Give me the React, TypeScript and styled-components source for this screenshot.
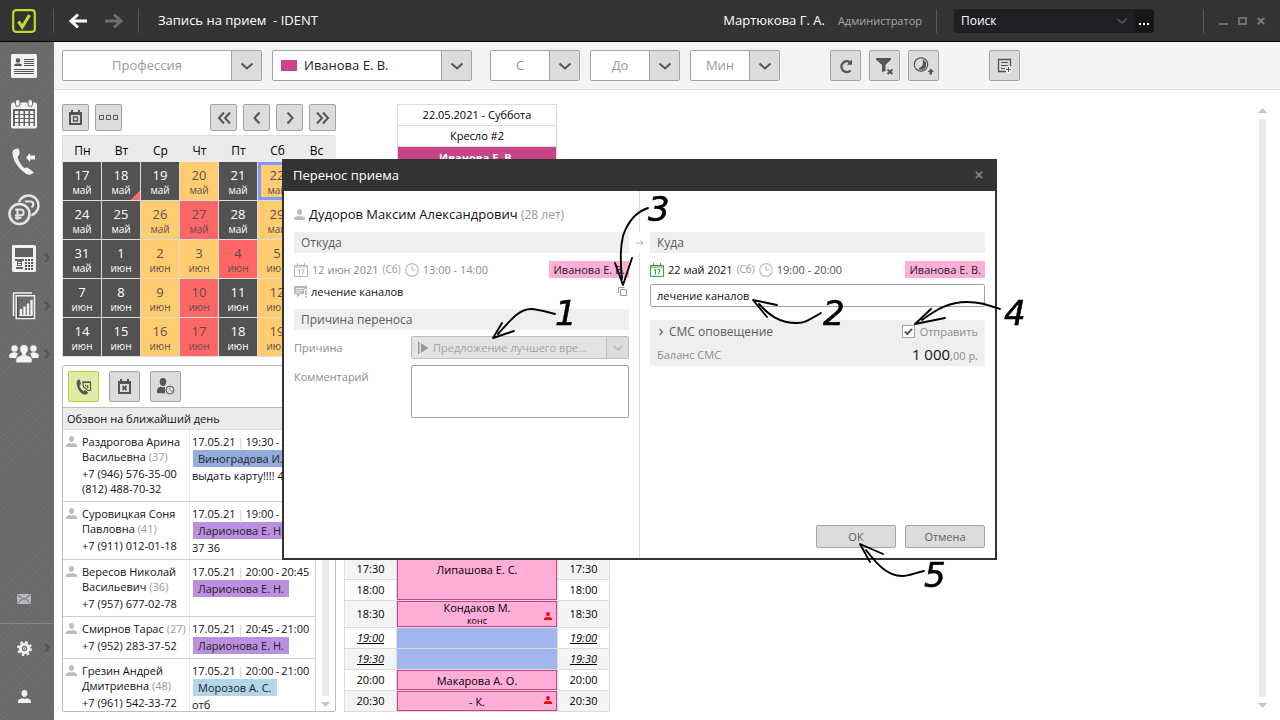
import React from "react";
import styled, { createGlobalStyle, css } from "styled-components";

const GlobalStyle = createGlobalStyle`
  *, *::before, *::after { box-sizing: border-box; }
  body { margin: 0; background: #fff; color: #111; }
  body, button, input, select, textarea {
    font-family: "Open Sans", "Noto Sans", sans-serif;
    font-size: 12px;
    line-height: 15px;
  }
  button, input, select, textarea { margin: 0; padding: 0; border: 0; background: none; color: inherit; border-radius: 0; }
  svg { display: block; flex: none; }
  table { border-spacing: 0; border-collapse: separate; }
  td, th { padding: 0; font-weight: 400; }
`;

/* ---------- shell ---------- */

const Shell = styled.div`
  height: 100vh;
  display: flex;
  flex-direction: column;
  overflow: hidden;
`;

const Header = styled.header`
  flex: none;
  height: 42px;
  display: flex;
  align-items: center;
  background: #333;
  border-bottom: 1px solid #000;
  color: #fff;
`;

const LogoLink = styled.a`
  width: 53px;
  padding-left: 12px;
`;

const Separator = styled.span`
  width: 1px;
  height: 24px;
  background: #5a5a5a;
`;

const HistoryNav = styled.div`
  display: flex;
  gap: 16px;
  width: 84px;
  padding-left: 14px;
`;

const Title = styled.h1`
  margin: 0 auto 0 19px;
  font-size: 13px;
  font-weight: 400;
  white-space: pre;
`;

const UserName = styled.span`
  font-size: 13px;
`;

const UserRole = styled.span`
  margin: 0 14px 0 13px;
  font-size: 11px;
  color: #a8a8a8;
`;

const Search = styled.div`
  width: 200px;
  height: 24px;
  margin: 0 49px 0 17px;
  display: flex;
  align-items: center;
  background: #1f2023;
  border-radius: 2px;
`;

const SearchInput = styled.input`
  flex: 1;
  min-width: 0;
  padding-left: 7px;
  outline: 0;
  &::placeholder { color: #fff; opacity: 1; }
`;

const MoreButton = styled.button`
  width: 20px;
  height: 22px;
  margin-left: 6px;
  background: #17181a;
  border-radius: 2px;
  display: flex;
  justify-content: center;
  padding-top: 13px;
`;

const WindowButtons = styled.div`
  display: flex;
  gap: 10px;
  padding: 0 15px;
`;

const Body = styled.div`
  flex: 1;
  min-height: 0;
  display: flex;
`;

const Sidebar = styled.nav`
  width: 54px;
  flex: none;
  display: flex;
  flex-direction: column;
  background:
    repeating-linear-gradient(135deg, rgba(255,255,255,0.03) 0 1px, transparent 1px 4px),
    repeating-linear-gradient(125deg, rgba(0,0,0,0.04) 0 1px, transparent 1px 3px),
    #6b6b6b;
`;

const SideLink = styled.a<{ $push?: boolean; $line?: boolean }>`
  position: relative;
  height: ${(p) => (p.$line ? 49 : 48)}px;
  width: 48px;
  display: flex;
  align-items: center;
  justify-content: center;
  ${(p) => p.$push && css`margin-top: auto;`}
  ${(p) => p.$line && css`width: 54px; padding-right: 6px; border-top: 1px solid #858585;`}
`;

const SideArrow = styled.span`
  position: absolute;
  left: 42px;
`;

const Workspace = styled.main`
  flex: 1;
  min-width: 0;
  display: flex;
  flex-direction: column;
`;

/* ---------- toolbar ---------- */

const Toolbar = styled.div`
  flex: none;
  height: 48px;
  padding: 8px;
  display: flex;
  background: #f4f4f4;
  border-bottom: 1px solid #dcdcdc;
`;

const Combo = styled.div<{ $width: number; $gap?: number }>`
  width: ${(p) => p.$width}px;
  height: 31px;
  margin-right: ${(p) => p.$gap ?? 10}px;
  display: flex;
  align-items: center;
  background: #fff;
  border: 1px solid #a3a3a3;
  border-radius: 2px;
`;

const ComboSelect = styled.select<{ $chosen?: boolean }>`
  flex: 1;
  min-width: 0;
  height: 100%;
  appearance: none;
  outline: 0;
  font-size: 13px;
  color: ${(p) => (p.$chosen ? "#222" : "#999")};
  text-align-last: ${(p) => (p.$chosen ? "left" : "center")};
`;

const ComboArrow = styled.span<{ $small?: boolean }>`
  width: ${(p) => (p.$small ? 22 : 30)}px;
  height: 100%;
  display: flex;
  align-items: center;
  justify-content: center;
  background: #dcdcdc;
  border-left: 1px solid ${(p) => (p.$small ? "#bdbdbd" : "#a3a3a3")};
`;

const Swatch = styled.span`
  width: 16px;
  height: 11px;
  margin: 0 7px 0 8px;
  background: #c94486;
`;

const IconButton = styled.button<{ $size: number; $active?: boolean; $gap?: number }>`
  width: ${(p) => p.$size}px;
  height: ${(p) => p.$size}px;
  margin-right: ${(p) => p.$gap ?? 0}px;
  display: flex;
  align-items: center;
  justify-content: center;
  background: ${(p) => (p.$active ? "#e0eca6" : "#dcdcdc")};
  border: 1px solid ${(p) => (p.$active ? "#b2d235" : "#a3a3a3")};
  border-radius: 2px;
`;

const Content = styled.div`
  flex: 1;
  min-height: 0;
  display: flex;
  padding: 14px 13px 8px 8px;
`;

/* ---------- left column ---------- */

const LeftColumn = styled.section`
  width: 274px;
  flex: none;
  display: flex;
  flex-direction: column;
`;

const CalendarBar = styled.div`
  height: 31px;
  display: flex;
  gap: 6px;
`;

const Push = styled.span`
  flex: 1;
`;

const Calendar = styled.table`
  width: 100%;
  table-layout: fixed;
  border: solid #dcdcdc;
  border-width: 1px 0 0 1px;
  border-radius: 2px 2px 0 0;
`;

const WeekDay = styled.th`
  height: 26px;
  background: #ebebeb;
  color: #000;
  font-size: 12px;
  padding-top: 2px;
`;

type Tone = "dark" | "amber" | "red";
const toneBg: Record<Tone, string> = { dark: "#525252", amber: "#ffcd70", red: "#ff6666" };

const DayCell = styled.td<{ $tone: Tone; $current?: boolean; $flag?: boolean }>`
  height: 39px;
  padding-top: 3px;
  text-align: center;
  border: solid #dcdcdc;
  border-width: 0 1px 1px 0;
  background: ${(p) => toneBg[p.$tone]};
  color: ${(p) => (p.$tone === "dark" ? "#fff" : "#5c4f4f")};
  ${(p) => p.$current && css`box-shadow: inset 0 0 0 3px #8098ff;`}
  ${(p) => p.$flag && css`background: linear-gradient(135deg, #525252 0 88%, #ff6666 88%);`}
`;

const DayNumber = styled.div`
  font-size: 13px;
  line-height: 15px;
`;

const DayMonth = styled.div`
  font-size: 10px;
  line-height: 14px;
`;

const Calls = styled.div`
  flex: 1;
  min-height: 0;
  margin-top: 8px;
  display: flex;
  flex-direction: column;
  border: 1px solid #bdbdbd;
  border-radius: 2px;
`;

const CallsBar = styled.div`
  flex: none;
  height: 42px;
  padding: 5px;
  display: flex;
  gap: 10px;
  border-bottom: 1px solid #bdbdbd;
`;

const CallsTitle = styled.h2`
  flex: none;
  height: 22px;
  margin: 0;
  padding: 3px 4px;
  background: #ebebeb;
  border-bottom: 1px solid #dcdcdc;
  font-size: 11px;
  font-weight: 500;
`;

const CallsScroll = styled.div`
  flex: 1;
  min-height: 0;
  display: flex;
  overflow: hidden;
`;

const CallsTable = styled.table`
  flex: 1;
  table-layout: fixed;
  font-size: 11px;
  line-height: 15px;
  white-space: nowrap;
`;

const PersonColumn = styled.col`
  width: 127px;
`;

const CallCell = styled.td<{ $height: number; $person?: boolean }>`
  height: ${(p) => p.$height}px;
  vertical-align: top;
  padding: 4px 0 0 ${(p) => (p.$person ? 3 : 2)}px;
  border-bottom: 1px solid #cfcfcf;
  font-weight: 500;
  ${(p) => p.$person && css`border-right: 1px solid #e6e6e6;`}
`;

const Person = styled.div`
  display: flex;
  gap: 5px;
`;

const PersonMark = styled.span`
  padding-top: 2px;
`;

const PersonName = styled.div`
  margin-bottom: 2px;
`;

const Muted = styled.span`
  color: #999;
  font-weight: 400;
`;

const CallTime = styled.div`
  display: flex;
  gap: 2px;
`;

const CallSpan = styled.span`
  display: flex;
  gap: 2px;
`;

const Bar = styled.span`
  color: #cdc3d3;
`;

const Tag = styled.span<{ $color: string }>`
  display: table;
  height: 17px;
  padding: 0 4px;
  font-size: 11px;
  line-height: 17px;
  font-weight: 500;
  color: #222;
  background: ${(p) => p.$color};
`;

const CallTag = styled(Tag)`
  margin: 1px 0 1px 1px;
  padding: 0 5px;
`;

const ScrollTrack = styled.div<{ $width: number; $line?: boolean }>`
  width: ${(p) => p.$width}px;
  flex: none;
  display: flex;
  flex-direction: column;
  align-items: center;
  gap: 6px;
  padding: 4px 0;
  ${(p) => p.$line && css`border-left: 1px solid #cfcfcf;`}
`;

const ScrollThumb = styled.span`
  flex: 1;
  width: 7px;
  background: #ebebeb;
`;

/* ---------- schedule ---------- */

const ScheduleArea = styled.section`
  flex: 1;
  min-width: 0;
  padding-left: 8px;
`;

const Schedule = styled.table`
  width: 266px;
  table-layout: fixed;
  font-size: 11px;
  text-align: center;
  color: #000;
`;

const TimeColumn = styled.col`
  width: 53px;
`;

const HeadCell = styled.th<{ $accent?: boolean }>`
  height: 21px;
  padding-bottom: ${(p) => (p.$accent ? 0 : 2)}px;
  border: solid #dcdcdc;
  border-width: 1px 1px 0 1px;
  background: ${(p) => (p.$accent ? "#c94486" : "#fff")};
  color: ${(p) => (p.$accent ? "#fff" : "#000")};
  font-weight: ${(p) => (p.$accent ? 700 : 500)};
`;

const Covered = styled.td`
  height: 392px;
`;

const TimeCell = styled.th<{ $shade?: boolean; $break?: boolean; $tall?: boolean }>`
  height: ${(p) => (p.$tall ? 27 : 21)}px;
  padding-bottom: 1px;
  border: solid #dcdcdc;
  border-width: 0 1px 1px 1px;
  background: ${(p) => (p.$shade ? "#f4f4f4" : "#fff")};
  font-size: 11px;
  font-weight: 500;
  ${(p) => p.$break && css`font-style: italic; text-decoration: underline;`}
`;

const SlotCell = styled.td<{ $rest?: boolean }>`
  vertical-align: top;
  border-bottom: 1px solid #dcdcdc;
  ${(p) => p.$rest && css`background: #a3b5ef; background-clip: padding-box;`}
`;

const Visit = styled.div<{ $rows: number; $note?: boolean }>`
  position: relative;
  height: ${(p) => (p.$note ? 26 : p.$rows * 21 - 1)}px;
  padding-top: ${(p) => (p.$note ? 0 : 4)}px;
  background: #ffaed7;
  border: 1px solid #c94486;
  font-weight: 500;
  line-height: 12px;
`;

const SlotNote = styled.div`
  font-size: 9px;
  line-height: 14px;
`;

const SlotFlag = styled.span`
  position: absolute;
  right: 4px;
  bottom: 6px;
`;

/* ---------- dialog ---------- */

const Overlay = styled.div`
  position: fixed;
  inset: 0;
  padding: 0 1px 1px 0;
  display: flex;
  align-items: center;
  justify-content: center;
`;

const Dialog = styled.div`
  position: relative;
  width: 715px;
  background: #fff;
  border: 2px solid #333;
  border-top: 0;
  display: flex;
  flex-direction: column;
`;

const DialogHead = styled.div`
  height: 32px;
  padding: 0 12px 0 9px;
  display: flex;
  align-items: center;
  justify-content: space-between;
  background: #333;
  color: #fff;
`;

const DialogTitle = styled.h2`
  margin: 0;
  font-size: 13px;
  font-weight: 400;
`;

const Panes = styled.div`
  display: grid;
  grid-template-columns: 1fr 1px 1fr;
  min-height: 367px;
`;

const Pane = styled.div`
  min-width: 0;
  padding: 12px 10px 10px;
  display: flex;
  flex-direction: column;
`;

const Divider = styled.div`
  display: flex;
  flex-direction: column;
  align-items: center;
  &::before { content: ""; width: 1px; height: 41px; background: #dcdcdc; }
  &::after { content: ""; width: 1px; flex: 1; background: #dcdcdc; }
`;

const DividerIcon = styled.span`
  height: 21px;
  display: flex;
  align-items: center;
`;

const Patient = styled.div`
  height: 22px;
  margin-bottom: 7px;
  display: flex;
  align-items: center;
  gap: 4px;
  font-size: 13px;
  font-weight: 500;
`;

const Age = styled.span`
  font-size: 12px;
  font-weight: 400;
  color: #999;
`;

const SectionBar = styled.h3`
  height: 21px;
  margin: 0;
  padding: 0 7px;
  background: #efefef;
  color: #5c5c5c;
  font-size: 12px;
  line-height: 21px;
  font-weight: 500;
`;

const When = styled.div<{ $muted?: boolean }>`
  height: 17px;
  margin: 8px 0 6px;
  display: flex;
  align-items: center;
  gap: 4px;
  font-size: 11px;
  font-weight: 500;
  color: ${(p) => (p.$muted ? "#8c8c8c" : "#111")};
`;

const WeekMark = styled.span`
  font-size: 10px;
  font-weight: 400;
  color: #999;
`;

const Hours = styled.span<{ $muted?: boolean }>`
  margin-right: auto;
  color: ${(p) => (p.$muted ? "#8c8c8c" : "#555")};
`;

const Treatment = styled.div`
  height: 15px;
  margin-bottom: 10px;
  display: flex;
  align-items: center;
  gap: 4px;
  font-size: 11px;
  font-weight: 500;
`;

const CopyButton = styled.button`
  margin: 0 2px 0 auto;
`;

const Field = styled.div`
  margin-top: 6px;
  display: grid;
  grid-template-columns: 117px 1fr;
`;

const Label = styled.label`
  padding-top: 4px;
  font-size: 11px;
  color: #8c8c8c;
`;

const DisabledCombo = styled.div`
  height: 23px;
  display: flex;
  align-items: center;
  gap: 4px;
  padding-left: 5px;
  background: #e3e3e3;
  border: 1px solid #bdbdbd;
  border-radius: 2px;
`;

const DisabledSelect = styled.select`
  flex: 1;
  min-width: 0;
  appearance: none;
  font-size: 11px;
  font-weight: 500;
  color: #a3a3a3;
  opacity: 1;
`;

const Comment = styled.textarea`
  height: 53px;
  resize: none;
  border: 1px solid #a3a3a3;
  border-radius: 2px;
`;

const TreatmentInput = styled.input`
  height: 23px;
  padding: 0 6px;
  border: 1px solid #a3a3a3;
  border-radius: 2px;
  font-size: 11px;
  font-weight: 500;
`;

const Sms = styled.section`
  height: 46px;
  margin-top: 13px;
  padding: 0 7px;
  background: #efefef;
  color: #8c8c8c;
  font-size: 11px;
`;

const SmsRow = styled.div`
  height: 23px;
  display: flex;
  align-items: center;
`;

const SmsToggle = styled.button`
  display: flex;
  align-items: center;
  gap: 4px;
  margin-right: auto;
  font-weight: 500;
  color: #5c5c5c;
`;

const CheckLabel = styled.label`
  display: flex;
  align-items: center;
  gap: 5px;
`;

const CheckBox = styled.input`
  appearance: none;
  width: 13px;
  height: 13px;
  border: 1px solid #a3a3a3;
  background: #fff;
  &:checked {
    background: #fff url("data:image/svg+xml,%3Csvg xmlns='http://www.w3.org/2000/svg' viewBox='0 0 11 11'%3E%3Cpath d='M2 5.5 4.4 8 9 2.8' fill='none' stroke='%23555' stroke-width='2'/%3E%3C/svg%3E");
  }
`;

const Balance = styled.span`
  margin-left: auto;
  color: #111;
  font-size: 15px;
`;

const Cents = styled.span`
  font-size: 11px;
  color: #8c8c8c;
`;

const Actions = styled.div`
  margin-top: auto;
  display: flex;
  justify-content: flex-end;
  gap: 9px;
`;

const ActionButton = styled.button`
  width: 80px;
  height: 23px;
  background: #dcdcdc;
  border: 1px solid #a3a3a3;
  border-radius: 2px;
  color: #5c5c5c;
  font-size: 11px;
  font-weight: 500;
`;

const Notes = styled.svg`
  position: absolute;
  left: 0;
  top: 0;
  overflow: visible;
  pointer-events: none;
`;

/* ---------- icons ---------- */

const Chevron = ({ dir, color = "#555", size = 14, w = 2 }: { dir: "down" | "left" | "right"; color?: string; size?: number; w?: number }) => {
  const d = { down: "M1.5 4.5 7 9.5l5.5-5", left: "M9.5 1.5 4.5 7l5 5.5", right: "M4.5 1.5 9.5 7l-5 5.5" }[dir];
  return (
    <svg width={size} height={size} viewBox="0 0 14 14" fill="none" stroke={color} strokeWidth={w}>
      <path d={d} />
    </svg>
  );
};

const DoubleChevron = ({ dir }: { dir: "left" | "right" }) => (
  <svg width="16" height="14" viewBox="0 0 16 14" fill="none" stroke="#555" strokeWidth="2">
    <path d={dir === "left" ? "M8 1.5 3 7l5 5.5M14 1.5 9 7l5 5.5" : "M2 1.5 7 7l-5 5.500M8 1.5 13 7l-5 5.5"} />
  </svg>
);

const Triangle = ({ up }: { up?: boolean }) => (
  <svg width="9" height="5" viewBox="0 0 9 5" fill="#c4c4c4">
    <path d={up ? "M0 5 4.5 0 9 5z" : "M0 0h9L4.5 5z"} />
  </svg>
);

const PersonIcon = ({ color = "#bdbdbd", size = 11 }: { color?: string; size?: number }) => (
  <svg width={size} height={size} viewBox="0 0 11 11" fill={color}>
    <path d="M5.500 0C7.200 0 8 1.200 8 2.800S7 6 5.500 6 3 4.400 3 2.800 3.800 0 5.500 0zM0 11V9.400C0 8 2 7.600 3.600 7c.6.5 3.200.5 3.800 0C9 7.600 11 8 11 9.400V11z" />
  </svg>
);

const Logo = () => (
  <svg width="24" height="24" viewBox="0 0 24 24" fill="none" stroke="#c3d82d">
    <rect x="1.200" y="1.200" width="21.600" height="21.600" rx="3" strokeWidth="2.200" />
    <path d="M6.500 12.500 10.200 18 17.500 6" strokeWidth="3.200" />
  </svg>
);

const HistoryArrow = ({ forward }: { forward?: boolean }) => (
  <svg width="20" height="16" viewBox="0 0 20 16" fill="none" stroke={forward ? "#6e6e6e" : "#fff"} strokeWidth="3">
    <path d={forward ? "M1 8h16M10 1.500l7 6.500-7 6.500" : "M19 8H3M10 1.500 3 8l7 6.500"} />
  </svg>
);

const CardIcon = () => (
  <svg width="26" height="24" viewBox="0 0 26 24">
    <rect width="26" height="24" rx="1.500" fill="#f2f2f2" />
    <g fill="#555">
      <circle cx="7" cy="6.500" r="2.200" />
      <path d="M3 12c0-2 2-2.500 4-2.500s4 .5 4 2.500z" />
      <path d="M13 5h10v1H13zM13 7h10v1H13zM13 9h10v1H13zM13 11h10v1H13zM3 15h20v1H3zM3 17h20v1H3zM3 19h20v1H3z" />
    </g>
  </svg>
);

const CalendarIcon = () => (
  <svg width="26" height="30" viewBox="0 0 26 30">
    <rect x="0" y="3.500" width="26" height="26" rx="2" fill="#f2f2f2" />
    <path d="M2 10h22v17H2z" fill="#636363" />
    <g fill="#f2f2f2">
      {[12, 16, 20, 24].map((y) => [4, 9, 14, 19].map((x) => <rect key={`${x}-${y}`} x={x} y={y} width="3.500" height="3" />))}
      <rect x="4.500" y="0.500" width="4.500" height="7" rx="2.200" stroke="#636363" />
      <rect x="17" y="0.500" width="4.500" height="7" rx="2.200" stroke="#636363" />
    </g>
  </svg>
);

const PhoneIcon = () => (
  <svg width="24" height="28" viewBox="0 0 24 28" fill="#f2f2f2">
    <path d="M1 2.500C2.500 1 5 .2 6 .5c.9.3 1.400 1.500 1.500 3.500.1 1.600 0 2.600-.6 3.200L5.600 8.500c.8 4.500 3.200 8.600 6.700 11.600l2-.5c.8-.2 1.500 0 2.500.8l4 3c.9.8.8 1.500-.2 2.200-1.800 1.400-4 1.500-6.300.3C7.500 21.500 1 13.500.5 5.500.4 4.200.5 3.200 1 2.500z" />
    <path d="M14 9.500 18 5v2.500h5v4h-5V14z" />
  </svg>
);

const CoinsIcon = () => (
  <svg width="32" height="32" viewBox="0 0 32 32" fill="none" stroke="#e6e6e6">
    <circle cx="20.500" cy="11.500" r="10" strokeWidth="2.300" />
    <path d="M17 7.500h6c3 .5 3 4 .5 6" strokeWidth="2.200" />
    <circle cx="11.500" cy="20" r="11.500" fill="#6b6b6b" stroke="#6b6b6b" strokeWidth="1" />
    <circle cx="11.500" cy="20" r="10" strokeWidth="2.600" />
    <path d="M9.500 26V15.500h3c4.200 0 4.200 5.800 0 5.800H7M7 23.700h6.500M7 15.500h3" strokeWidth="2" />
  </svg>
);

const CashIcon = () => (
  <svg width="24" height="27" viewBox="0 0 24 27">
    <rect width="24" height="27" rx="1.500" fill="#f2f2f2" />
    <path d="M3 3h18v9H3zM3 14h9v2H3zM5 16h5v5H5zM4 22h7v2H4z" fill="#636363" />
    <path d="M6 17h3v1H6zM6 19h3v1H6z" fill="#f2f2f2" />
    <g fill="#555">{[14, 17, 20, 23].map((y) => [13, 16, 19].map((x) => <rect key={`${x}-${y}`} x={x} y={y} width="2" height="2" />))}</g>
  </svg>
);

const ChartIcon = () => (
  <svg width="24" height="28" viewBox="0 0 24 28" fill="none" stroke="#f2f2f2">
    <path d="M20 1H1.500v23" strokeWidth="1.500" />
    <path d="M4.200 3.700H22.500V26.500H4.200z" strokeWidth="1.500" />
    <path d="M5.500 25.200V5M5.500 25.200h16" stroke="#4a4a4a" strokeWidth="1" />
    <path d="M7 23.500h13" />
    <path d="M9 23.500V17M12.500 23.500V14.500M16 23.500V11.500M19.500 23.500V8" strokeWidth="2.400" />
  </svg>
);

const PeopleIcon = () => (
  <svg width="30" height="20" viewBox="0 0 30 20" fill="#f2f2f2">
    <circle cx="5.500" cy="4.500" r="3.200" />
    <circle cx="24.500" cy="4.500" r="3.200" />
    <path d="M0 12.500C0 9 3 9 4.500 8.200h2L9 9.500 7 14H1zM30 12.500c0-3.500-3-3.500-4.500-4.300h-2L21 9.500l2 4.500h6z" />
    <path d="M15 .5c3 0 4.300 2 4.300 4.500 0 2-1 3.800-2 4.500v1.500c2 .8 5.700 1.200 6 5 .1 2-.3 3-1.300 3H8c-1 0-1.400-1-1.300-3 .3-3.800 4-4.200 6-5V9.500c-1-.7-2-2.500-2-4.500C10.700 2.500 12 .5 15 .5z" stroke="#6b6b6b" strokeWidth="1" />
  </svg>
);

const MailIcon = () => (
  <svg width="14" height="10" viewBox="0 0 14 10">
    <rect width="14" height="10" rx="1" fill="#b5b5bf" />
    <path d="M1 1l6 4.500L13 1M1 9l4-4M13 9 9 5" fill="none" stroke="#6b6b6b" />
  </svg>
);

const GearIcon = () => (
  <svg width="15" height="15" viewBox="0 0 15 15" fill="none" stroke="#f2f2f2">
    <circle cx="7.500" cy="7.500" r="4.200" strokeWidth="3" />
    <circle cx="7.500" cy="7.500" r="6.500" strokeWidth="2" strokeDasharray="2.500 2.605" />
    <circle cx="7.500" cy="7.500" r="1" strokeWidth="1" />
  </svg>
);

const RefreshIcon = () => (
  <svg width="14" height="16" viewBox="0 0 14 16" fill="none" stroke="#555" strokeWidth="2.400">
    <path d="M11.500 12.600A5.400 5.400 0 1 1 11 4.200" />
    <path d="M13 1.500v5.300H8z" fill="#555" stroke="none" />
  </svg>
);

const FilterIcon = () => (
  <svg width="20" height="20" viewBox="0 0 20 20" fill="#555">
    <path d="M1 2h15v1.500L10.500 9v6L7 16V9L1 3.500z" />
    <path d="M12.500 13.500l5 4.500M17.500 13.500l-5 4.500" stroke="#555" strokeWidth="2" />
  </svg>
);

const MoonIcon = () => (
  <svg width="21" height="20" viewBox="0 0 21 20">
    <circle cx="8" cy="8.500" r="6.700" fill="none" stroke="#555" strokeWidth="1.200" />
    <path d="M9.500 3.500c3.500 1 4.500 5 3 8-1.500 2.500-5 3-7.500 1.200C7 12.500 7.500 10.500 9.500 9.500 10 8 10 5.500 9.500 3.500z" fill="#555" />
    <path d="M14.500 16l3.300-3.500L21 16h-2v2.500h-2.500V16z" fill="#555" />
  </svg>
);

const NoteIcon = () => (
  <svg width="16" height="16" viewBox="0 0 16 16" fill="none" stroke="#555">
    <path d="M13.500 8V1.500H1.500v12H9" strokeWidth="1.300" />
    <path d="M4 4.500h7M4 7.500h7M4 10.500h4" />
    <path d="M8 11.500h7M11.500 8v7" stroke="#f4f4f4" strokeWidth="3" />
    <path d="M9 11.500h5M11.500 9v5" />
  </svg>
);

const TodayIcon = ({ cross }: { cross?: boolean }) => (
  <svg width="15" height="15" viewBox="0 0 15 15">
    <path d="M1 2h13v13H1zM3 0h2v2H3zM10 0h2v2h-2z" fill="#555" />
    <path d="M3 5h9v8H3z" fill="#dcdcdc" />
    {cross ? (
      <path d="M5.500 7l4 4M9.500 7l-4 4" stroke="#555" strokeWidth="1.800" />
    ) : (
      <path d="M5.500 7h4v4h-4z" fill="none" stroke="#555" strokeWidth="1.300" />
    )}
  </svg>
);

const DotsIcon = () => (
  <svg width="19" height="5" viewBox="0 0 19 5" fill="none" stroke="#555">
    <path d="M.5.500h4v4h-4zM7.500.500h4v4h-4zM14.500.500h4v4h-4z" />
  </svg>
);

const CallIcon = () => (
  <svg width="16" height="16" viewBox="0 0 16 16">
    <path d="M1 2C2 .5 3 .3 3.800 1L5 4.500C5 5.500 4 5.800 3.500 6.500c.5 2.500 2 4.200 4 5.500 1-.8 1.700-1 2.500-.5l2 2c0 1.500-2 2.500-4 2-4.500-1.300-8.500-9-7-13.500z" fill="#555" />
    <path d="M7 3.500h7.500v8H12L7.500 8z" fill="none" stroke="#555" strokeWidth="1.200" />
    <path d="M6.500 3h8.500M9 6.500h1M11.500 6v3" stroke="#555" strokeWidth="1.500" />
  </svg>
);

const PatientClockIcon = () => (
  <svg width="18" height="17" viewBox="0 0 18 17">
    <path d="M6 0c2.500 0 3.300 1.700 3.300 3.700S8 8 6 8 2.700 5.700 2.700 3.700 3.500 0 6 0zM0 15v-2.500C0 10 2 9.500 3.500 8.500 5 9.500 7 9.500 8 9v6.500z" fill="#555" />
    <circle cx="13" cy="12" r="4" fill="#dcdcdc" stroke="#555" />
    <path d="M13 12V8.500A3.500 3.500 0 0 1 16 13.500z" fill="#fff" stroke="#555" strokeWidth=".6" />
  </svg>
);

const DateIcon = ({ color }: { color: string }) => (
  <svg width="14" height="14" viewBox="0 0 14 14" fill="none" stroke={color}>
    <path d="M.5 2.500h13v11H.5zM.500 4h13M3.500 0v3M10.500 0v3M4 7.500l1.500-1V11.500M7.500 6.500H10L8.500 11.500" />
  </svg>
);

const ClockIcon = () => (
  <svg width="14" height="14" viewBox="0 0 14 14" fill="none" stroke="#bdbdbd" strokeWidth="1.200">
    <circle cx="7" cy="7" r="6.300" />
    <path d="M7 3v4h3.500" />
  </svg>
);

const ComplaintIcon = () => (
  <svg width="13" height="13" viewBox="0 0 13 13">
    <path d="M0 1h13v3h-3v5H6l-3 4V9H0z" fill="#b5b5b5" />
    <path d="M2 3.500h8M2 5.500h7M2 7.500h5" stroke="#fff" strokeWidth=".8" />
    <path d="M11 5h1.500v5H11zM11 11h1.500v1.500H11z" fill="#a3a3a3" />
  </svg>
);

const CopyIcon = () => (
  <svg width="9" height="9" viewBox="0 0 9 9" fill="none" stroke="#999">
    <path d="M.5 6V.500H6.500M2.500 2.500h6v6h-6z" />
  </svg>
);

const ReasonIcon = () => (
  <svg width="12" height="12" viewBox="0 0 12 12" fill="#999">
    <path d="M1 0h1.500v12H1zM4 1l7.500 5L4 11z" />
  </svg>
);

const CloseIcon = () => (
  <svg width="8" height="8" viewBox="0 0 8 8" stroke="#808080" strokeWidth="1.800">
    <path d="M.8.800l6.400 6.400M7.200.800.800 7.200" />
  </svg>
);

/* ---------- data ---------- */

const weekDays = ["Пн", "Вт", "Ср", "Чт", "Пт", "Сб", "Вс"];

const weeks: [number, string, Tone][][] = [
  [[17, "май", "dark"], [18, "май", "dark"], [19, "май", "dark"], [20, "май", "amber"], [21, "май", "dark"], [22, "май", "amber"]],
  [[24, "май", "dark"], [25, "май", "dark"], [26, "май", "amber"], [27, "май", "red"], [28, "май", "dark"], [29, "май", "amber"]],
  [[31, "май", "dark"], [1, "июн", "dark"], [2, "июн", "amber"], [3, "июн", "amber"], [4, "июн", "red"], [5, "июн", "amber"]],
  [[7, "июн", "dark"], [8, "июн", "dark"], [9, "июн", "amber"], [10, "июн", "red"], [11, "июн", "dark"], [12, "июн", "amber"]],
  [[14, "июн", "dark"], [15, "июн", "dark"], [16, "июн", "amber"], [17, "июн", "red"], [18, "июн", "dark"], [19, "июн", "amber"]],
];

const calls = [
  { name: ["Раздрогова Арина", "Васильевна"], age: 37, phones: ["+7 (946) 576-35-00", "(812) 488-70-32"], time: ["19:30", "20:30"], doctor: "Виноградова И. А.", color: "#93acdd", note: "выдать карту!!!! 45", height: 72 },
  { name: ["Суровицкая Соня", "Павловна"], age: 41, phones: ["+7 (911) 012-01-18"], time: ["19:00", "20:00"], doctor: "Ларионова Е. Н.", color: "#bb90e0", note: "37 36", height: 58 },
  { name: ["Вересов Николай", "Васильевич"], age: 36, phones: ["+7 (957) 677-02-78"], time: ["20:00", "20:45"], doctor: "Ларионова Е. Н.", color: "#bb90e0", height: 57 },
  { name: ["Смирнов Тарас"], age: 27, phones: ["+7 (952) 283-37-52"], time: ["20:45", "21:00"], doctor: "Ларионова Е. Н.", color: "#bb90e0", height: 42 },
  { name: ["Грезин Андрей", "Дмитриевна"], age: 48, phones: ["+7 (961) 542-33-72"], time: ["20:00", "21:00"], doctor: "Морозов А. С.", color: "#b3d6ea", note: "отб", height: 57 },
];

type Slot = { time: string; visit?: string; rows?: number; note?: string; flag?: boolean; rest?: boolean; joined?: boolean; shade?: boolean };

const slots: Slot[] = [
  { time: "17:30", visit: "Липашова Е. С.", rows: 2, shade: true },
  { time: "18:00", joined: true },
  { time: "18:30", visit: "Кондаков М.", note: "конс", flag: true, shade: true },
  { time: "19:00", rest: true },
  { time: "19:30", rest: true, shade: true },
  { time: "20:00", visit: "Макарова А. О." },
  { time: "20:30", visit: "- К.", flag: true, shade: true },
];

const sideItems = [
  { label: "Картотека", icon: <CardIcon /> },
  { label: "Расписание", icon: <CalendarIcon /> },
  { label: "Звонки", icon: <PhoneIcon /> },
  { label: "Оплата", icon: <CoinsIcon /> },
  { label: "Касса", icon: <CashIcon />, more: true },
  { label: "Отчеты", icon: <ChartIcon />, more: true },
  { label: "Сотрудники", icon: <PeopleIcon />, more: true },
];

const filters = [
  { label: "Профессия", width: 200 },
  { label: "Иванова Е. В.", width: 200, gap: 18, chosen: true },
  { label: "С", width: 90 },
  { label: "До", width: 90 },
  { label: "Мин", width: 90, gap: 50 },
];

/* ---------- page ---------- */

const TopBar = () => (
  <Header>
    <LogoLink href="#" aria-label="IDENT"><Logo /></LogoLink>
    <Separator />
    <HistoryNav>
      <button type="button" aria-label="Назад"><HistoryArrow /></button>
      <button type="button" aria-label="Вперед"><HistoryArrow forward /></button>
    </HistoryNav>
    <Separator />
    <Title>{"Запись на прием  - IDENT"}</Title>
    <UserName>Мартюкова Г. А.</UserName>
    <UserRole>Администратор</UserRole>
    <Separator />
    <Search>
      <SearchInput placeholder="Поиск" aria-label="Поиск" />
      <Chevron dir="down" color="#555" size={12} />
      <MoreButton type="button" aria-label="Еще">
        <svg width="10" height="2" viewBox="0 0 10 2" fill="#fff"><path d="M0 0h2v2H0zM4 0h2v2H4zM8 0h2v2H8z" /></svg>
      </MoreButton>
    </Search>
    <Separator />
    <WindowButtons>
      <button type="button" aria-label="Свернуть"><svg width="9" height="8" viewBox="0 0 9 8"><path d="M0 6h9v2H0z" fill="#707070" /></svg></button>
      <button type="button" aria-label="Развернуть"><svg width="9" height="8" viewBox="0 0 9 8"><path d="M1 1h7v6H1z" fill="none" stroke="#707070" strokeWidth="2" /></svg></button>
      <button type="button" aria-label="Закрыть"><CloseIcon /></button>
    </WindowButtons>
  </Header>
);

const MoreMark = () => <SideArrow><Chevron dir="right" size={10} color="#555" w={3} /></SideArrow>;

const SideNav = () => (
  <Sidebar>
    {sideItems.map((item) => (
      <SideLink key={item.label} href="#" aria-label={item.label}>
        {item.icon}
        {item.more && <MoreMark />}
      </SideLink>
    ))}
    <SideLink href="#" aria-label="Почта" $push><MailIcon /></SideLink>
    <SideLink href="#" aria-label="Настройки" $line>
      <GearIcon />
      <MoreMark />
    </SideLink>
    <SideLink href="#" aria-label="Профиль"><PersonIcon color="#f2f2f2" size={13} /></SideLink>
  </Sidebar>
);

const Filters = () => (
  <Toolbar>
    {filters.map((f) => (
      <Combo key={f.label} $width={f.width} $gap={f.gap}>
        {f.chosen && <Swatch />}
        <ComboSelect aria-label={f.label} $chosen={f.chosen}><option>{f.label}</option></ComboSelect>
        <ComboArrow><Chevron dir="down" /></ComboArrow>
      </Combo>
    ))}
    <IconButton type="button" aria-label="Обновить" $size={31} $gap={8}><RefreshIcon /></IconButton>
    <IconButton type="button" aria-label="Сбросить фильтр" $size={31} $gap={8}><FilterIcon /></IconButton>
    <IconButton type="button" aria-label="Смена" $size={31} $gap={50}><MoonIcon /></IconButton>
    <IconButton type="button" aria-label="Добавить заметку" $size={31}><NoteIcon /></IconButton>
  </Toolbar>
);

const MonthCalendar = () => (
  <>
    <CalendarBar>
      <IconButton type="button" aria-label="Сегодня" $size={27}><TodayIcon /></IconButton>
      <IconButton type="button" aria-label="Период" $size={27}><DotsIcon /></IconButton>
      <Push />
      <IconButton type="button" aria-label="Месяц назад" $size={27}><DoubleChevron dir="left" /></IconButton>
      <IconButton type="button" aria-label="Неделя назад" $size={27}><Chevron dir="left" /></IconButton>
      <IconButton type="button" aria-label="Неделя вперед" $size={27}><Chevron dir="right" /></IconButton>
      <IconButton type="button" aria-label="Месяц вперед" $size={27}><DoubleChevron dir="right" /></IconButton>
    </CalendarBar>
    <Calendar>
      <thead><tr>{weekDays.map((d) => <WeekDay key={d} scope="col">{d}</WeekDay>)}</tr></thead>
      <tbody>
        {weeks.map((week, i) => (
          <tr key={i}>
            {week.map(([day, month, tone]) => (
              <DayCell key={day} $tone={tone} $current={day === 22} $flag={i === 0 && day === 18}>
                <DayNumber>{day}</DayNumber>
                <DayMonth>{month}</DayMonth>
              </DayCell>
            ))}
            <DayCell $tone="red" />
          </tr>
        ))}
      </tbody>
    </Calendar>
  </>
);

const CallList = () => (
  <Calls>
    <CallsBar>
      <IconButton type="button" aria-label="Обзвон" $size={31} $active><CallIcon /></IconButton>
      <IconButton type="button" aria-label="Отмененные приемы" $size={31}><TodayIcon cross /></IconButton>
      <IconButton type="button" aria-label="Лист ожидания" $size={31}><PatientClockIcon /></IconButton>
    </CallsBar>
    <CallsTitle>Обзвон на ближайший день</CallsTitle>
    <CallsScroll>
      <CallsTable>
        <colgroup><PersonColumn /><col /></colgroup>
        <tbody>
          {calls.map((c) => (
            <tr key={c.name[0]}>
              <CallCell $height={c.height} $person>
                <Person>
                  <PersonMark><PersonIcon /></PersonMark>
                  <div>
                    <PersonName>
                      {c.name[0]}
                      {c.name[1] && <><br />{c.name[1]}</>} <Muted>({c.age})</Muted>
                    </PersonName>
                    {c.phones.map((p) => <div key={p}>{p}</div>)}
                  </div>
                </Person>
              </CallCell>
              <CallCell $height={c.height}>
                <CallTime>
                  <span>17.05.21</span>
                  <Bar>|</Bar>
                  <CallSpan><span>{c.time[0]}</span><span>-</span><span>{c.time[1]}</span></CallSpan>
                </CallTime>
                <CallTag $color={c.color}>{c.doctor}</CallTag>
                {c.note}
              </CallCell>
            </tr>
          ))}
        </tbody>
      </CallsTable>
      <ScrollTrack $width={20} $line><ScrollThumb /><Triangle /></ScrollTrack>
    </CallsScroll>
  </Calls>
);

const DaySchedule = () => (
  <ScheduleArea>
    <Schedule>
      <colgroup><TimeColumn /><col /><TimeColumn /></colgroup>
      <thead>
        <tr><td /><HeadCell scope="col">22.05.2021 - Суббота</HeadCell><td /></tr>
        <tr><td /><HeadCell>Кресло #2</HeadCell><td /></tr>
        <tr><td /><HeadCell $accent>Иванова Е. В.</HeadCell><td /></tr>
      </thead>
      <tbody>
        <tr><Covered colSpan={3} /></tr>
        {slots.map((s) => {
          const time = <TimeCell scope="row" $shade={s.shade} $break={s.rest} $tall={Boolean(s.note)}>{s.time}</TimeCell>;
          return (
            <tr key={s.time}>
              {time}
              {!s.joined && (
                <SlotCell rowSpan={s.rows} $rest={s.rest}>
                  {s.visit && (
                    <Visit $rows={s.rows ?? 1} $note={Boolean(s.note)}>
                      {s.visit}
                      {s.note && <SlotNote>{s.note}</SlotNote>}
                      {s.flag && <SlotFlag><PersonIcon color="#f00" size={8} /></SlotFlag>}
                    </Visit>
                  )}
                </SlotCell>
              )}
              {time}
            </tr>
          );
        })}
      </tbody>
    </Schedule>
  </ScheduleArea>
);

const Annotations = () => (
  <Notes width="711" height="401" viewBox="284 159 711 401" aria-hidden="true">
    <g fill="none" stroke="#000" strokeWidth="1.900" strokeLinecap="round" strokeLinejoin="round">
      <path d="M555 314c-8-2-18-5-24-5-14 0-24 16-33 25M502 323l-9 15 21-7" />
      <path d="M821 313c-11 6-15 10-24 10-18 0-28-8-38-19M777 305l-24-5 14 17" />
      <path d="M648 208c-12 4-20 13-25 28-3 12-3 24-1 43M615 263l8 22 9-27" />
      <path d="M1000 309c-12-4-20-7-33-7-18 0-30 7-45 18M931 309l-16 15 30-6" />
      <path d="M924 571c-9 2-15 5-22 5-15 0-25-12-36-26M883 554l-23-10 10 18" />
    </g>
    <g fill="#000" stroke="#000" strokeWidth=".6" fontFamily="'DejaVu Sans', sans-serif" fontStyle="italic" fontSize="34">
      <text x="555" y="325">1</text>
      <text x="823" y="325">2</text>
      <text x="648" y="221">3</text>
      <text x="1004" y="325">4</text>
      <text x="924" y="587">5</text>
    </g>
  </Notes>
);

const MoveDialog = () => (
  <Overlay>
    <Dialog role="dialog" aria-labelledby="move-title">
      <DialogHead>
        <DialogTitle id="move-title">Перенос приема</DialogTitle>
        <button type="button" aria-label="Закрыть"><CloseIcon /></button>
      </DialogHead>
      <Panes>
        <Pane>
          <Patient>
            <PersonIcon />
            <span>Дудоров Максим Александрович <Age>(28 лет)</Age></span>
          </Patient>
          <SectionBar>Откуда</SectionBar>
          <When $muted>
            <DateIcon color="#b5b5b5" />
            <span>12 июн 2021</span>
            <WeekMark>(Сб)</WeekMark>
            <ClockIcon />
            <Hours $muted>13:00 - 14:00</Hours>
            <Tag $color="#ffaed7">Иванова Е. В.</Tag>
          </When>
          <Treatment>
            <ComplaintIcon />
            лечение каналов
            <CopyButton type="button" aria-label="Скопировать"><CopyIcon /></CopyButton>
          </Treatment>
          <SectionBar>Причина переноса</SectionBar>
          <Field>
            <Label htmlFor="reason">Причина</Label>
            <DisabledCombo>
              <ReasonIcon />
              <DisabledSelect id="reason" disabled><option>Предложение лучшего вре...</option></DisabledSelect>
              <ComboArrow $small><Chevron dir="down" color="#b5b5b5" size={10} /></ComboArrow>
            </DisabledCombo>
          </Field>
          <Field>
            <Label htmlFor="comment">Комментарий</Label>
            <Comment id="comment" />
          </Field>
        </Pane>
        <Divider>
          <DividerIcon>
            <svg width="8" height="8" viewBox="0 0 8 8" fill="none" stroke="#b5b5b5"><path d="M0 4h7M4.500 1.500 7 4 4.500 6.500" /></svg>
          </DividerIcon>
        </Divider>
        <Pane>
          <Patient />
          <SectionBar>Куда</SectionBar>
          <When>
            <DateIcon color="#35a23b" />
            <span>22 май 2021</span>
            <WeekMark>(Сб)</WeekMark>
            <ClockIcon />
            <Hours>19:00 - 20:00</Hours>
            <Tag $color="#ffaed7">Иванова Е. В.</Tag>
          </When>
          <TreatmentInput aria-label="Лечение" defaultValue="лечение каналов" />
          <Sms>
            <SmsRow>
              <SmsToggle type="button"><Chevron dir="right" size={8} />СМС оповещение</SmsToggle>
              <CheckLabel><CheckBox type="checkbox" defaultChecked />Отправить</CheckLabel>
            </SmsRow>
            <SmsRow>
              Баланс СМС
              <Balance>1 000<Cents>,00 р.</Cents></Balance>
            </SmsRow>
          </Sms>
          <Actions>
            <ActionButton type="button">ОК</ActionButton>
            <ActionButton type="button">Отмена</ActionButton>
          </Actions>
        </Pane>
      </Panes>
      <Annotations />
    </Dialog>
  </Overlay>
);

export default function App() {
  return (
    <Shell>
      <GlobalStyle />
      <TopBar />
      <Body>
        <SideNav />
        <Workspace>
          <Filters />
          <Content>
            <LeftColumn>
              <MonthCalendar />
              <CallList />
            </LeftColumn>
            <DaySchedule />
            <ScrollTrack $width={9}><Triangle up /><ScrollThumb /><Triangle /></ScrollTrack>
          </Content>
        </Workspace>
      </Body>
      <MoveDialog />
    </Shell>
  );
}
